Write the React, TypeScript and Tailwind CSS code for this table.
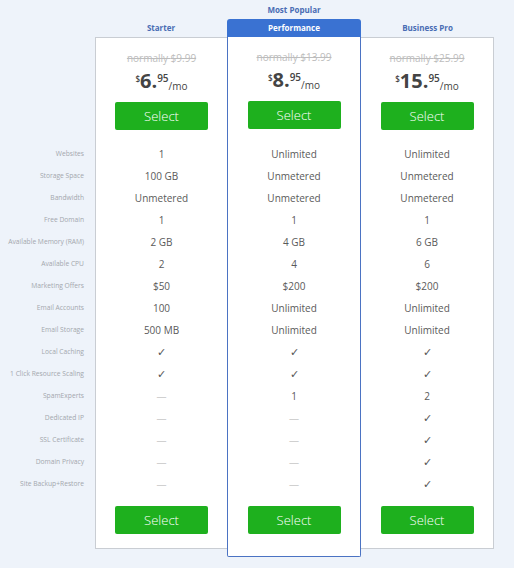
import React from "react";

const labels = [
  "Websites",
  "Storage Space",
  "Bandwidth",
  "Free Domain",
  "Available Memory (RAM)",
  "Available CPU",
  "Marketing Offers",
  "Email Accounts",
  "Email Storage",
  "Local Caching",
  "1 Click Resource Scaling",
  "SpamExperts",
  "Dedicated IP",
  "SSL Certificate",
  "Domain Privacy",
  "Site Backup+Restore",
];

const Y = "check";
const N = "dash";

const plans = [
  {
    name: "Starter",
    normal: "$9.99",
    price: "6",
    cents: "95",
    values: ["1", "100 GB", "Unmetered", "1", "2 GB", "2", "$50", "100", "500 MB", Y, Y, N, N, N, N, N],
  },
  {
    name: "Performance",
    normal: "$13.99",
    price: "8",
    cents: "95",
    values: ["Unlimited", "Unmetered", "Unmetered", "1", "4 GB", "4", "$200", "Unlimited", "Unlimited", Y, Y, "1", N, N, N, N],
  },
  {
    name: "Business Pro",
    normal: "$25.99",
    price: "15",
    cents: "95",
    values: ["Unlimited", "Unmetered", "Unmetered", "1", "6 GB", "6", "$200", "Unlimited", "Unlimited", Y, Y, "2", Y, Y, Y, Y],
  },
];

const SelectButton = () => (
  <button
    type="button"
    className="w-[93px] h-[28px] rounded-[2px] bg-[#1eb01e] text-white text-[13px] font-light leading-none mx-auto block"
  >
    Select
  </button>
);

const Value = ({ v }: { v: string }) => {
  if (v === Y) return <span className="text-[#555] text-[11px]">✓</span>;
  if (v === N) return <span className="text-[#d0d0d0] text-[10px]">—</span>;
  return <span>{v}</span>;
};

const CardBody = ({ plan, shift = false }: { plan: (typeof plans)[number]; shift?: boolean }) => (
  <div className="flex flex-col items-center pt-[12px] pb-[14px]">
    <div className="h-[16px] leading-[16px] text-[10px] text-[#bdbdbd] line-through">
      normally {plan.normal}
    </div>
    <div className="h-[24px] mt-[2px] flex items-start text-[#444] leading-none">
      <span className="text-[8px] mt-[7px] font-semibold">$</span>
      <span className="text-[20px] font-bold mt-[3px]">{plan.price}.</span>
      <span className="text-[10px] mt-[5px] font-semibold">{plan.cents}</span>
      <span className="text-[10px] mt-[13px]">/mo</span>
    </div>
    <div className="mt-[10px]">
      <SelectButton />
    </div>
    <div className={shift ? "mt-[14px] w-full" : "mt-[13px] w-full"}>
      {plan.values.map((v, i) => (
        <div key={i} className="h-[22px] flex items-center justify-center text-[10px] text-[#5a5a5a]">
          <Value v={v} />
        </div>
      ))}
    </div>
    <div className="mt-[11px]">
      <SelectButton />
    </div>
  </div>
);

export default function App() {
  const [starter, perf, biz] = plans;
  return (
    <div
      className="w-[514px] h-[568px] bg-[#eef3fa] flex items-start overflow-hidden"
      style={{ fontFamily: '"Open Sans", "Liberation Sans", sans-serif' }}
    >
      {/* labels */}
      <div className="w-[95px] pt-[143px] pr-[11px]">
        {labels.map((l) => (
          <div key={l} className="h-[22px] flex items-center justify-end text-[6.7px] text-[#a3a7ad] whitespace-nowrap">
            {l}
          </div>
        ))}
      </div>

      {/* starter */}
      <div className="w-[132px] flex flex-col">
        <div className="h-[37px] flex items-end justify-center pb-[3px] text-[8px] font-bold text-[#4a6db4]">
          {starter.name}
        </div>
        <div className="bg-white border border-r-0 border-[#c9cdd3]">
          <CardBody plan={starter} />
        </div>
      </div>

      {/* performance */}
      <div className="w-[134px] flex flex-col">
        <div className="h-[19px] flex items-center justify-center text-[8px] font-bold text-[#4a6db4]">
          Most Popular
        </div>
        <div className="h-[18px] bg-[#3a72d2] rounded-t-[3px] flex items-center justify-center text-[8px] font-bold text-white">
          {perf.name}
        </div>
        <div className="bg-white border border-t-0 border-[#4b73c3] rounded-b-[2px] pb-[8px]">
          <CardBody plan={perf} shift />
        </div>
      </div>

      {/* business pro */}
      <div className="w-[133px] flex flex-col">
        <div className="h-[37px] flex items-end justify-center pb-[3px] text-[8px] font-bold text-[#4a6db4]">
          {biz.name}
        </div>
        <div className="bg-white border border-l-0 border-[#c9cdd3]">
          <CardBody plan={biz} />
        </div>
      </div>
    </div>
  );
}
